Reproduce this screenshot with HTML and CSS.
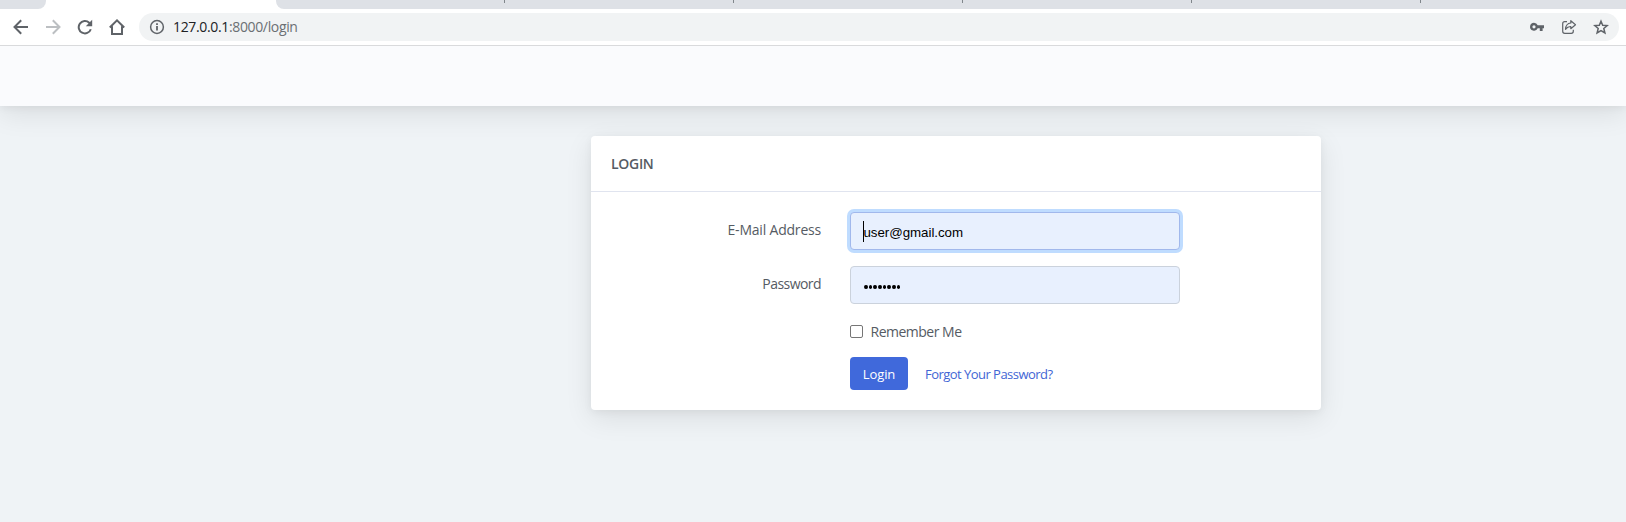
FILE: index.html
```html
<!DOCTYPE html>
<html lang="en">
<head>
<meta charset="utf-8">
<title>Login</title>
<link rel="stylesheet" href="styles.css">
</head>
<body>
<div class="tabs">
  <div class="tab-prev"></div>
  <div class="tab-active"></div>
  <div class="tab-rest"><i></i><i></i><i></i><i></i><i></i></div>
</div>
<div class="toolbar">
  <div class="nav-icons">
    <svg width="16" height="16" viewBox="0 0 16 16" fill="none" stroke="#5f6368" stroke-width="2"><path d="M15 8H2M8.200 1.200 1.500 8l6.700 6.800"/></svg>
    <svg width="16" height="16" viewBox="0 0 16 16" fill="none" stroke="#bcbfc2" stroke-width="2"><path d="M1 8h13M7.800 1.200 14.500 8l-6.700 6.800"/></svg>
    <svg width="16" height="16" viewBox="0 0 16 16"><path d="M13.800 10.200A6.200 6.200 0 1 1 12.200 3.700L14 5.500" fill="none" stroke="#5f6368" stroke-width="2"/><path d="M15.200.8v6.400H8.800z" fill="#5f6368"/></svg>
    <svg width="16" height="16" viewBox="0 0 16 16" fill="none" stroke="#5f6368" stroke-width="2"><path d="M.8 8.500 8 1.400l7.200 7.100M3 7.200V15h10V7.200"/></svg>
  </div>
  <div class="omnibox">
    <svg width="16" height="16" viewBox="0 0 16 16"><circle cx="8" cy="8" r="6.400" fill="none" stroke="#5f6368" stroke-width="1.500"/><path d="M7.100 7h1.800v4.600H7.100zM7.100 4.300h1.800v1.700H7.100z" fill="#5f6368"/></svg>
    <span class="url"><b>127.0.0.1</b><span>:8000/login</span></span>
    <div class="actions">
      <svg width="16" height="16" viewBox="0 0 16 16"><path fill="#5f6368" fill-rule="evenodd" d="M5 3.700a4 4 0 0 1 3.700 2.600H15v3h-1.400V12h-2.800V9.300H8.700A4 4 0 1 1 5 3.700zM5 6.200a1.600 1.600 0 1 0 0 3.200 1.600 1.600 0 0 0 0-3.200z"/></svg>
      <svg width="16" height="16" viewBox="0 0 16 16" fill="none" stroke="#5f6368" stroke-width="1.200" stroke-linejoin="round"><path d="M6 2.700H3.700Q1.700 2.700 1.700 4.700v7.600q0 2 2 2h6.600q2 0 2-2V10.700"/><path d="M9.800 1.700 14.500 5.700 9.800 9.700V7.500Q6.500 7.400 4.500 10.300 4.900 4.400 9.800 4z"/></svg>
      <svg width="16" height="16" viewBox="0 0 16 16" fill="none" stroke="#5f6368" stroke-width="1.500"><path d="m8 2.200 1.700 4 4.500.4-3.400 2.900 1.100 4.500L8 11.600 4.100 14l1.100-4.500L1.800 6.600l4.500-.4z"/></svg>
    </div>
  </div>
</div>
<nav class="navbar"></nav>
<main class="page">
  <form class="card">
    <div class="card-header"><span class="t-title">LOGIN</span></div>
    <div class="card-body">
      <div class="row">
        <label class="label t-email">E-Mail Address</label>
        <div class="input focused"><span class="caret"></span><span class="t-value">user@gmail.com</span></div>
      </div>
      <div class="row">
        <label class="label t-pass">Password</label>
        <div class="input"><span class="dots"><i></i><i></i><i></i><i></i><i></i><i></i><i></i><i></i></span></div>
      </div>
      <div class="remember"><span class="box"></span><span class="t-rem">Remember Me</span></div>
      <div class="submit"><span class="btn"><span class="t-btn">Login</span></span><a class="t-link">Forgot Your Password?</a></div>
    </div>
  </form>
</main>
</body>
</html>
```
FILE: styles.css
```css
* { box-sizing: border-box; }
body {
  margin: 0;
  height: 522px;
  overflow: hidden;
  display: flex;
  flex-direction: column;
  background: #eff3f6;
  font: 14px/20px "Open Sans", "Noto Sans", sans-serif;
  color: #555b63;
}
svg { display: block; flex: none; }
.tabs { display: flex; height: 9px; background: #fff; flex: none; position: relative; z-index: 1; }
.tab-prev { width: 46px; background: #dee1e6; border-bottom-right-radius: 8px; }
.tab-active { width: 230px; }
.tab-rest { flex: 1; display: flex; gap: 228px; padding-left: 228px; background: #dee1e6; border-bottom-left-radius: 8px; }
.tab-rest i { width: 1px; height: 3px; flex: none; background: #80868b; }
.toolbar { display: flex; align-items: center; height: 37px; flex: none; padding: 0 7px 0 13px; background: #fff; border-bottom: 1px solid #d9dadc; position: relative; z-index: 1; }
.nav-icons { display: flex; gap: 16px; width: 126px; }
.omnibox { flex: 1; display: flex; align-items: center; height: 28px; padding: 0 10px; border-radius: 14px; background: #f1f3f4; }
.url { margin-left: 8px; white-space: nowrap; font-size: 14px; color: #6b6f73; letter-spacing: -.35px; }
.url b { font-weight: 400; color: #202124; }
.actions { display: flex; gap: 16px; margin-left: auto; }
.navbar { height: 60px; flex: none; background: #fafbfd; box-shadow: 0 8px 28px rgba(0, 0, 0, .09), 0 2px 8px rgba(0, 0, 0, .05); }
.page { padding: 30px 305px 0 591px; }
.card { height: 274px; margin: 0; background: #fff; border-radius: 4px; box-shadow: 0 8px 28px rgba(0, 0, 0, .09), 0 2px 8px rgba(0, 0, 0, .05); }
.card-header { height: 56px; padding: 18px 20px; border-bottom: 1px solid #e0e4ef; font-weight: 600; letter-spacing: -.3px; }
.card-body { padding: 20px 0 0; }
.row { display: flex; align-items: center; gap: 29px; margin-bottom: 16px; }
.label { width: 230px; padding-bottom: 2px; text-align: right; white-space: nowrap; }
.t-email { letter-spacing: -.2px; }
.t-pass { letter-spacing: -.55px; }
.t-rem { letter-spacing: -.5px; }
.input { display: flex; align-items: center; width: 330px; height: 38px; padding: 4px 13px 0; border: 1px solid #cbd2dc; border-radius: 4px; background: #e8f0fe; color: #000; font: 13.333px/20px "Liberation Sans", Arial, sans-serif; }
.t-value { letter-spacing: -.05px; margin-left: -.5px; }
.focused { border-color: #a1b8ec; box-shadow: 0 0 0 3px #bfdcff; }
.caret { width: 1px; height: 21px; margin: -4px 0 0 -1px; background: #000; }
.dots { display: flex; gap: 1px; margin-top: -1px; }
.dots i { width: 3.670px; height: 4px; border-radius: 50%; background: #000; }
.remember { display: flex; align-items: center; gap: 7.500px; height: 21px; margin: 17px 0 15px 259px; }
.box { width: 13px; height: 13px; border: 1px solid #767676; border-radius: 2px; }
.submit { display: flex; align-items: center; gap: 17px; margin-left: 259px; }
.btn { display: flex; align-items: center; justify-content: center; width: 58px; height: 33px; border-radius: 4px; background: #4069db; color: #fff; }
.t-link { color: #4265d4; font-size: 13px; letter-spacing: -.53px; }
.t-btn { font-size: 13px; letter-spacing: -.1px; }
```
